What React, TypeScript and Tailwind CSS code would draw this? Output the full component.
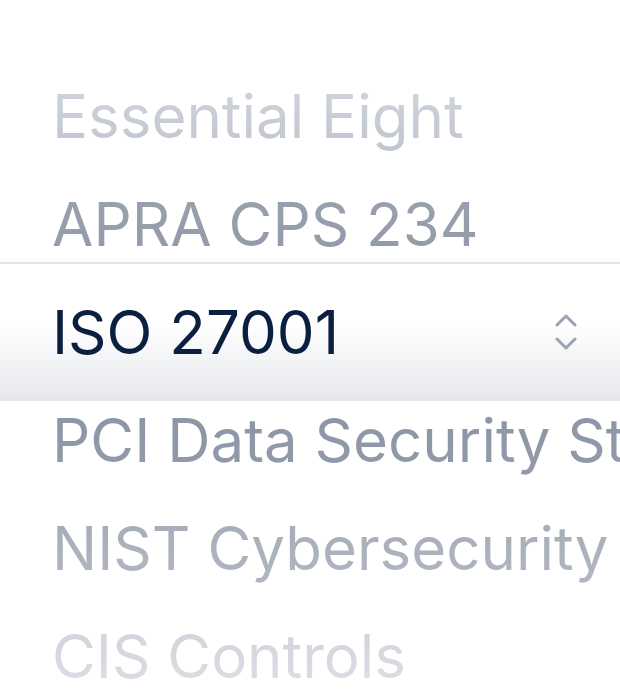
const ROWS: { label: string; tone: string }[] = [
  { label: "Essential Eight", tone: "bg-linear-to-b from-[#d2d6dd] to-[#bfc5ce]" },
  { label: "APRA CPS 234", tone: "bg-linear-to-b from-[#9aa2b0] to-[#929aa9]" },
  { label: "ISO 27001", tone: "" },
  { label: "PCI Data Security Standard", tone: "bg-linear-to-b from-[#8c95a5] to-[#939bab]" },
  { label: "NIST Cybersecurity Framework", tone: "bg-linear-to-b from-[#a4abb8] to-[#b1b7c2]" },
  { label: "CIS Controls", tone: "bg-linear-to-b from-[#cfd3da] to-[#dcdfe4]" },
]

function UpDown() {
  return (
    <svg width="22" height="38" viewBox="0 0 22 38" fill="none" stroke="#9aa2b1" strokeWidth="3" strokeLinecap="round" strokeLinejoin="round">
      <path d="M2 12 11 3l9 9" />
      <path d="M2 26l9 9 9-9" />
    </svg>
  )
}

export default function App() {
  return (
    <div className="h-[690px] w-[620px] overflow-hidden bg-white" style={{ fontFamily: "Inter, 'Noto Sans', sans-serif" }}>
      <div className="pt-[62px]">
        {ROWS.map((r, i) =>
          i === 2 ? (
            <div key={r.label} className="relative flex h-[108px] items-center justify-between pl-[52px] pr-[43px]">
              <div className="absolute inset-x-0 -top-[16px] -bottom-[15px] border-y-2 border-[#e3e5e9] bg-linear-to-b from-white from-45% to-[#e6e8ec]" />
              <span className="relative text-[60px] leading-[1.3] text-[#0b1f41]">{r.label}</span>
              <span className="relative">
                <UpDown />
              </span>
            </div>
          ) : (
            <div key={r.label} className="flex h-[108px] items-center pl-[52px]">
              <span className={`whitespace-nowrap bg-clip-text text-[60px] leading-[1.3] text-transparent ${r.tone}`}>
                {r.label}
              </span>
            </div>
          )
        )}
      </div>
    </div>
  )
}
